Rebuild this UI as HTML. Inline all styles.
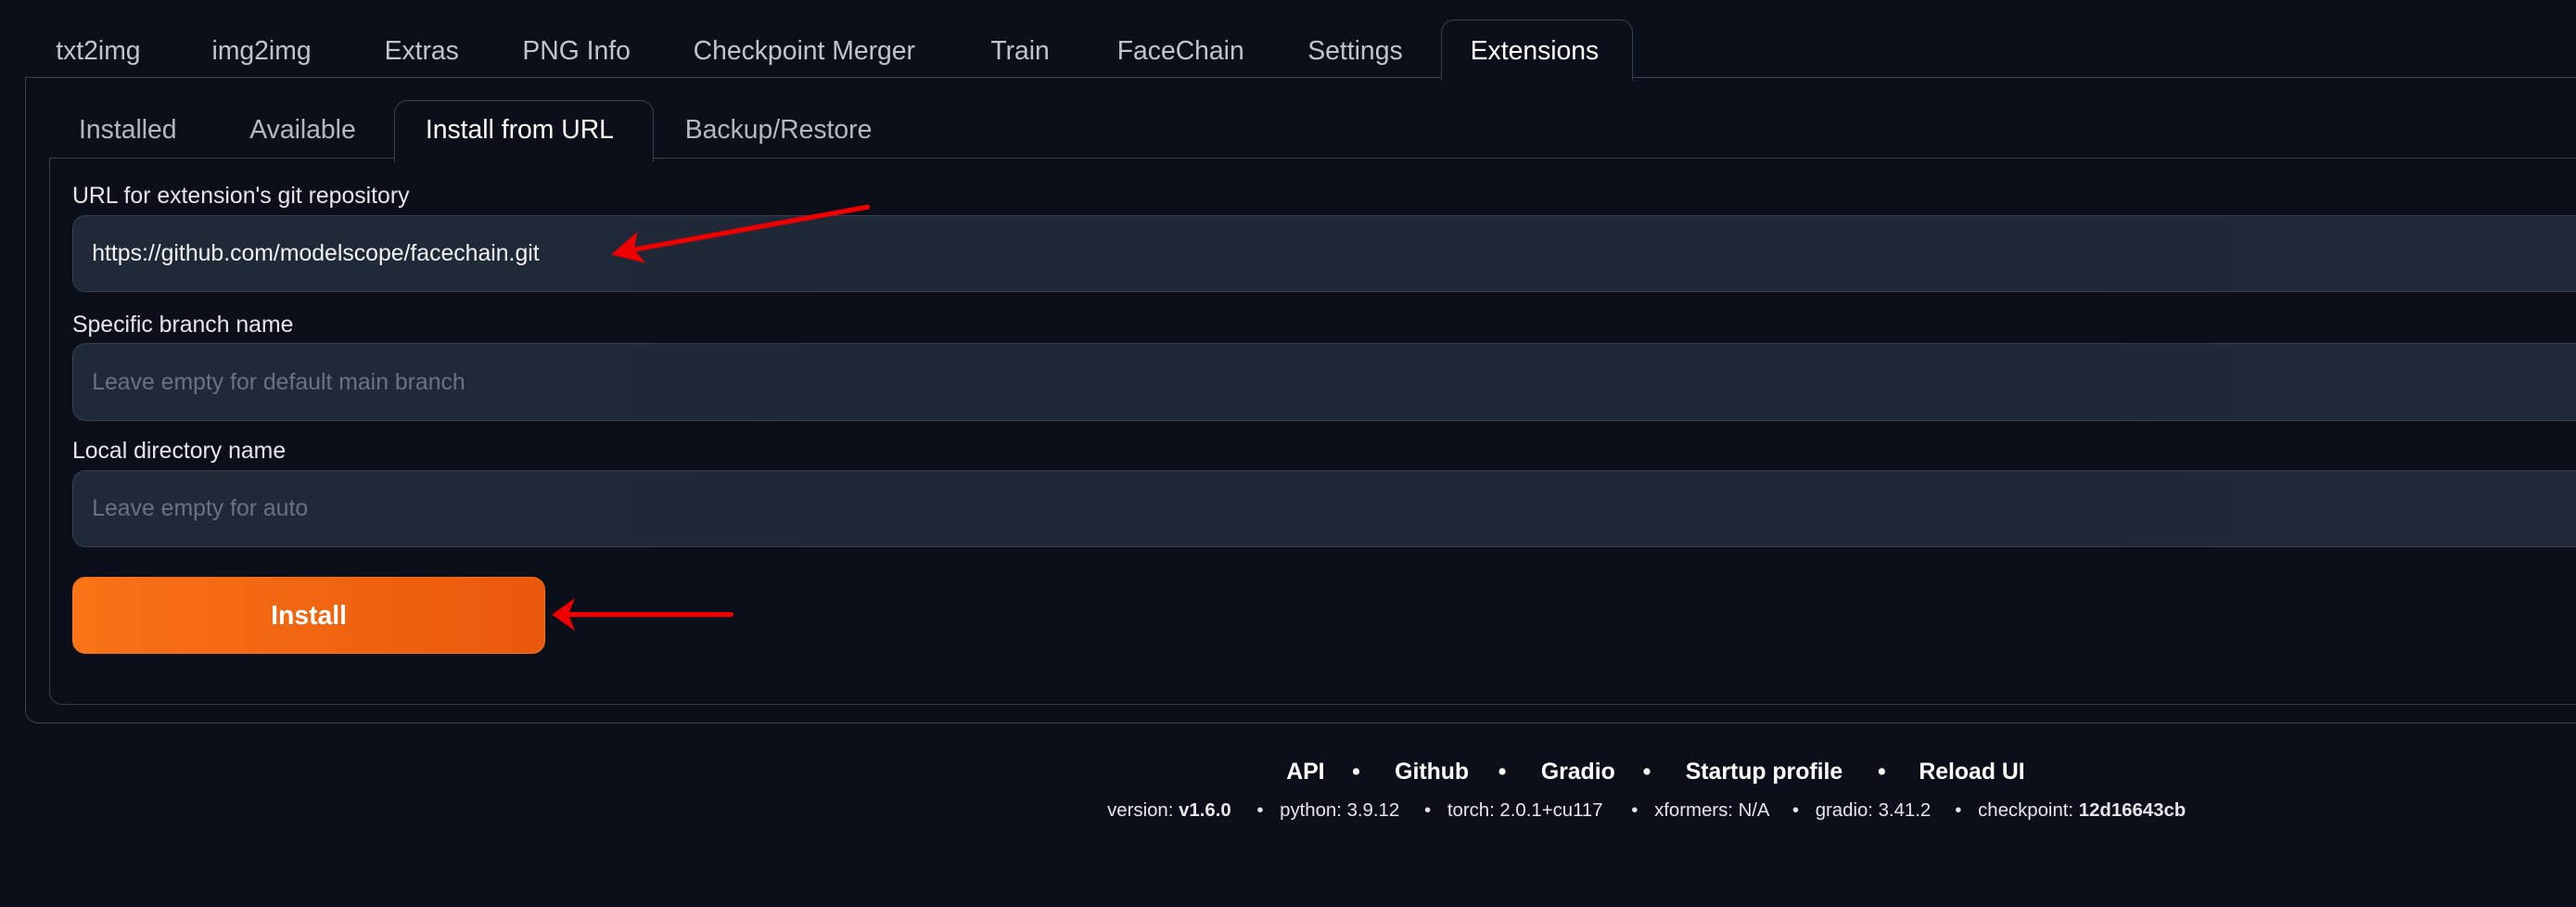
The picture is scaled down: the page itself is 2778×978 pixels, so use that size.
<!DOCTYPE html>
<html><head><meta charset="utf-8"><style>
html,body{margin:0;padding:0;background:#0b0f19;overflow:hidden}
body{width:2778px;height:978px}
#z{zoom:1.77168;width:1568px;height:552px;position:relative;font-family:"Liberation Sans",sans-serif;color:#e5e7eb}
.a{position:absolute;white-space:nowrap}
.tab{font-size:16px;color:#c0c4cc;top:22px}
.sub{font-size:16px;color:#b4b8c0;top:70px}
.lbl{font-size:14px;color:#e5e7eb}
.inp{position:absolute;left:44px;width:1540px;height:47px;border:1px solid #374151;border-radius:8px;background:linear-gradient(90deg,#1f2937,#1e2836 60%,#1f2937);box-sizing:border-box}
.ph{font-size:14px;color:#6b7280}
.f{top:462px;font-size:14px;font-weight:bold;color:#fff}
.v{top:487px;font-size:11.5px;color:#e5e7eb}
</style></head><body><div id="z">
<div class="a tab" style="left:34px">txt2img</div>
<div class="a tab" style="left:129px">img2img</div>
<div class="a tab" style="left:234px">Extras</div>
<div class="a tab" style="left:318px">PNG Info</div>
<div class="a tab" style="left:422px">Checkpoint Merger</div>
<div class="a tab" style="left:603px">Train</div>
<div class="a tab" style="left:680px">FaceChain</div>
<div class="a tab" style="left:796px">Settings</div>
<div class="a" style="left:15px;top:47px;width:1600px;height:393px;border:1px solid #374151;border-radius:0 0 0 8px;box-sizing:border-box"></div>
<div class="a" style="left:877px;top:12px;width:117px;height:37px;border:1px solid #374151;border-bottom:none;border-radius:8px 8px 0 0;background:#0b0f19;box-sizing:border-box"></div>
<div class="a tab" style="left:895px;color:#fff">Extensions</div>
<div class="a" style="left:30px;top:96px;width:1600px;height:333px;border:1px solid #374151;border-radius:0 0 0 8px;box-sizing:border-box"></div>
<div class="a" style="left:240px;top:61px;width:158px;height:37px;border:1px solid #374151;border-bottom:none;border-radius:8px 8px 0 0;background:#0b0f19;box-sizing:border-box"></div>
<div class="a sub" style="left:48px">Installed</div>
<div class="a sub" style="left:152px">Available</div>
<div class="a sub" style="left:259px;color:#fff">Install from URL</div>
<div class="a sub" style="left:417px">Backup/Restore</div>
<div class="a lbl" style="left:44px;top:112px">URL for extension's git repository</div>
<div class="inp" style="top:131px"></div>
<div class="a" style="left:56px;top:147px;font-size:14px;color:#f3f4f6">https://github.com/modelscope/facechain.git</div>
<div class="a lbl" style="left:44px;top:190px">Specific branch name</div>
<div class="inp" style="top:209px"></div>
<div class="a ph" style="left:56px;top:225px">Leave empty for default main branch</div>
<div class="a lbl" style="left:44px;top:267px">Local directory name</div>
<div class="inp" style="top:286px"></div>
<div class="a ph" style="left:56px;top:302px">Leave empty for auto</div>
<div class="a" style="left:44px;top:351px;width:288px;height:47px;border-radius:8px;background:linear-gradient(90deg,#f97316,#ea580c);border:1px solid #f97316;box-sizing:border-box;text-align:center;line-height:47px;font-size:16px;font-weight:bold;color:#fff">Install</div>
<svg class="a" style="left:0;top:0" width="1568" height="552">
<g stroke="#e00" stroke-width="3" fill="none" stroke-linecap="round">
<line x1="528" y1="126" x2="380" y2="153"/>
<line x1="445" y1="374" x2="344" y2="374"/>
</g>
<g fill="#e00">
<polygon points="372,155 388,141 386,152 393,160"/>
<polygon points="336,374 350,364 346,374 350,384"/>
</g></svg>
<div class="a f" style="left:783px">API</div>
<div class="a f" style="left:823px">•</div>
<div class="a f" style="left:849px">Github</div>
<div class="a f" style="left:912px">•</div>
<div class="a f" style="left:938px">Gradio</div>
<div class="a f" style="left:1000px">•</div>
<div class="a f" style="left:1026px">Startup profile</div>
<div class="a f" style="left:1143px">•</div>
<div class="a f" style="left:1168px">Reload UI</div>
<div class="a v" style="left:674px">version: <b>v1.6.0</b></div>
<div class="a v" style="left:765px">•</div>
<div class="a v" style="left:779px">python: 3.9.12</div>
<div class="a v" style="left:867px">•</div>
<div class="a v" style="left:881px">torch: 2.0.1+cu117</div>
<div class="a v" style="left:993px">•</div>
<div class="a v" style="left:1007px">xformers: N/A</div>
<div class="a v" style="left:1091px">•</div>
<div class="a v" style="left:1105px">gradio: 3.41.2</div>
<div class="a v" style="left:1190px">•</div>
<div class="a v" style="left:1204px">checkpoint: <b>12d16643cb</b></div>
</div></body></html>
